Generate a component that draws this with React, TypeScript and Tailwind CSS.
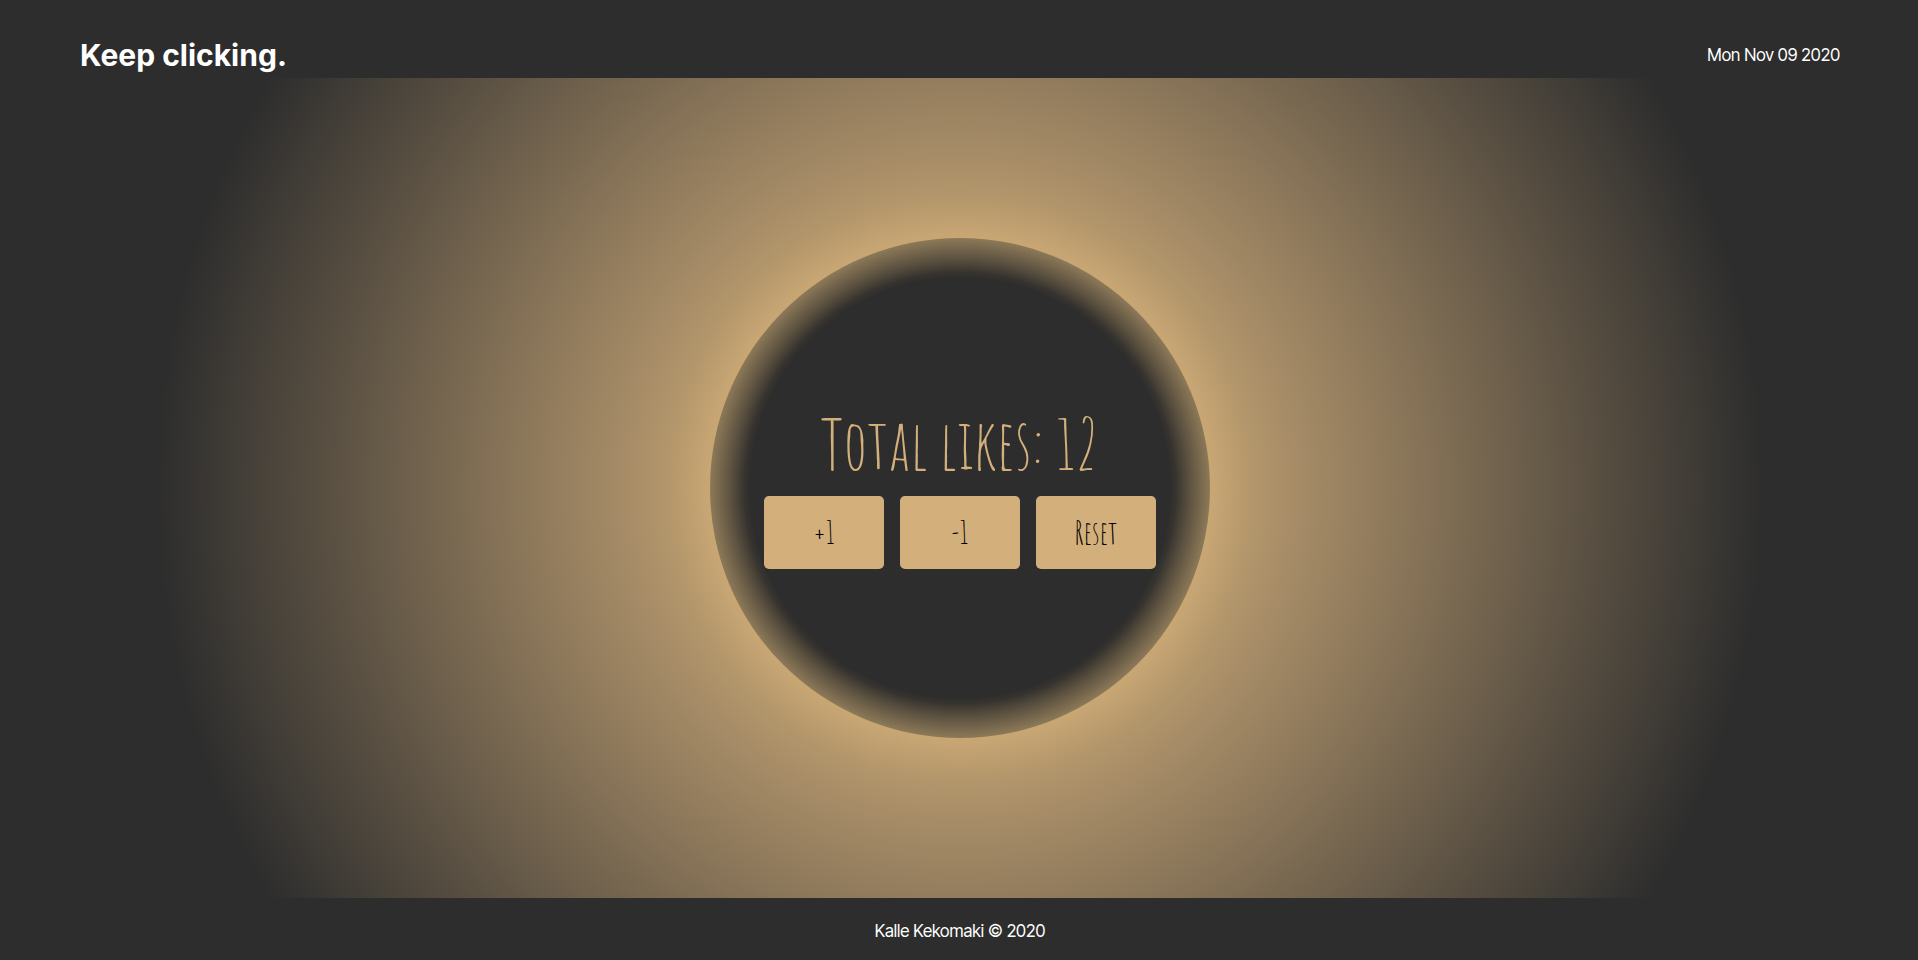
import { useState } from "react";

const INITIAL_LIKES = 12;

type CounterButtonProps = {
  label: string;
  onClick: () => void;
};

function CounterButton({ label, onClick }: CounterButtonProps) {
  return (
    <button
      type="button"
      onClick={onClick}
      className="h-[73px] w-[120px] cursor-pointer rounded-[5px] bg-[#d3af7c] font-['Amatic_SC','Open_Sans_Condensed_Light',cursive] text-[32px] leading-10 text-black"
    >
      {label}
    </button>
  );
}

export default function App() {
  const [likes, setLikes] = useState(INITIAL_LIKES);

  return (
    <div className="flex min-h-screen flex-col bg-[#2d2d2d] pl-0.5 font-['Inter',sans-serif] text-white">
      <header className="flex items-center justify-between px-[78px] pt-[35px] pb-[3px]">
        <h1 className="text-[30px] leading-10 font-bold">Keep clicking.</h1>
        <p className="font-['Inter_Tight','Inter',sans-serif] text-[17px] leading-6">Mon Nov 09 2020</p>
      </header>

      <main className="flex flex-1 items-center justify-center bg-[radial-gradient(circle_804px_at_center,#cdaa78_240px,#c8a674_252px,#b4976b_290px,#a98e68_325px,#2d2d2d_804px)]">
        <section className="flex size-[500px] flex-col items-center justify-center rounded-full bg-[radial-gradient(circle_250px_at_center,#2d2d2d_210px,#37342f_216px,#5e5341_230px,#8c7958_250px)]">
          <h2 className="mb-[17px] font-['Amatic_SC','Open_Sans_Condensed_Light',cursive] text-[70px] leading-[72px] font-normal text-[#d3af7c]">
            Total likes: {likes}
          </h2>
          <div className="flex gap-4">
            <CounterButton label="+1" onClick={() => setLikes(likes + 1)} />
            <CounterButton label="-1" onClick={() => setLikes(likes - 1)} />
            <CounterButton label="Reset" onClick={() => setLikes(0)} />
          </div>
        </section>
      </main>

      <footer className="flex justify-center pt-[21px] pb-[17px]">
        <p className="font-['Inter_Tight','Inter',sans-serif] text-[17px] leading-6">Kalle Kekomaki © 2020</p>
      </footer>
    </div>
  );
}
